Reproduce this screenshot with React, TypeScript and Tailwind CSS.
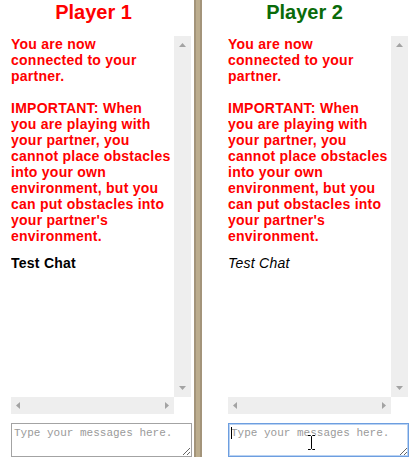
import React from "react";

const Up = () => (
  <svg width="7" height="4" viewBox="0 0 7 4"><polygon points="3.5,0 7,4 0,4" fill="#a3a3a3" /></svg>
);
const Down = () => (
  <svg width="7" height="4" viewBox="0 0 7 4"><polygon points="0,0 7,0 3.5,4" fill="#a3a3a3" /></svg>
);
const Left = () => (
  <svg width="4" height="7" viewBox="0 0 4 7"><polygon points="4,0 4,7 0,3.5" fill="#a3a3a3" /></svg>
);
const Right = () => (
  <svg width="4" height="7" viewBox="0 0 4 7"><polygon points="0,0 4,3.5 0,7" fill="#a3a3a3" /></svg>
);

const lines = [
  "You are now",
  "connected to your",
  "partner.",
  "\u00a0",
  "IMPORTANT: When",
  "you are playing with",
  "your partner, you",
  "cannot place obstacles",
  "into your own",
  "environment, but you",
  "can put obstacles into",
  "your partner's",
  "environment.",
];

function ChatBox({ italic }: { italic: boolean }) {
  return (
    <div className="grid grid-cols-[163px_17px] grid-rows-[361px_17px] w-[180px] h-[378px]">
      <div className="bg-white overflow-hidden">
        <div className="text-[14px] leading-[16px] font-bold text-[#ff0000] tracking-[0.25px] whitespace-nowrap">
          {lines.map((l, i) => (
            <div key={i}>{l}</div>
          ))}
        </div>
        {italic ? (
          <div className="mt-[11px] text-[14px] leading-[16px] italic text-black tracking-[0.25px] whitespace-nowrap">Test Chat</div>
        ) : (
          <div className="mt-[11px] text-[14px] leading-[16px] font-bold text-black tracking-[0.25px] whitespace-nowrap">Test Chat</div>
        )}
      </div>
      <div className="bg-[#eeeeee] flex flex-col justify-between items-center py-[7px]">
        <Up />
        <Down />
      </div>
      <div className="bg-[#eeeeee] flex justify-between items-center px-[5px]">
        <Left />
        <Right />
      </div>
      <div className="bg-white" />
    </div>
  );
}

export default function App() {
  return (
    <div
      className="w-[410px] h-[457px] flex bg-white overflow-hidden"
      style={{ fontFamily: '"Liberation Sans", Arial, sans-serif' }}
    >
      <div className="w-[194px] flex flex-col">
        <div className="h-[36px] text-center pr-[7px] text-[20px] leading-[24px] font-bold text-[#ff0000]">Player 1</div>
        <div className="ml-[11px]">
          <ChatBox italic={false} />
        </div>
        <textarea
          placeholder="Type your messages here."
          className="ml-[11px] mt-[9px] w-[181px] h-[34px] border border-[#a3a3a3] px-[2px] py-[3px] text-[11px] leading-[13px] outline-none placeholder:text-[#9a9a9a] bg-white"
          style={{ fontFamily: '"Liberation Mono", "Courier New", monospace' }}
        />
      </div>
      <div className="w-[8px] bg-[#bcad8e] border-x-2 border-[#a3947a]" />
      <div className="w-[208px] flex flex-col">
        <div className="h-[36px] text-center pr-[3px] text-[20px] leading-[24px] font-bold text-[#0a6b0a]">Player 2</div>
        <div className="ml-[26px]">
          <ChatBox italic={true} />
        </div>
        <div className="relative ml-[26px] mt-[9px] w-[181px] h-[34px]">
          <textarea
            placeholder="Type your messages here."
            className="w-[181px] h-[34px] border border-[#6d9ee0] shadow-[inset_0_0_0_1px_#b9d2f2] px-[2px] py-[3px] text-[11px] leading-[13px] outline-none placeholder:text-[#9a9a9a] bg-white caret-transparent"
            style={{ fontFamily: '"Liberation Mono", "Courier New", monospace' }}
          />
          <div className="absolute left-[3px] top-[4px] w-[1px] h-[12px] bg-black" />
          <svg className="absolute left-[79px] top-[11px]" width="9" height="17" viewBox="0 0 9 17">
            <path d="M1 1.5 H3.5 L4.5 2.5 L5.5 1.5 H8 M4.5 2.5 V14.5 M1 15.5 H3.5 L4.5 14.5 L5.5 15.5 H8" stroke="#ffffff" strokeWidth="3" fill="none" />
            <path d="M1 1.5 H3.5 L4.5 2.5 L5.5 1.5 H8 M4.5 2.5 V14.5 M1 15.5 H3.5 L4.5 14.5 L5.5 15.5 H8" stroke="#000000" strokeWidth="1" fill="none" />
          </svg>
        </div>
      </div>
    </div>
  );
}
